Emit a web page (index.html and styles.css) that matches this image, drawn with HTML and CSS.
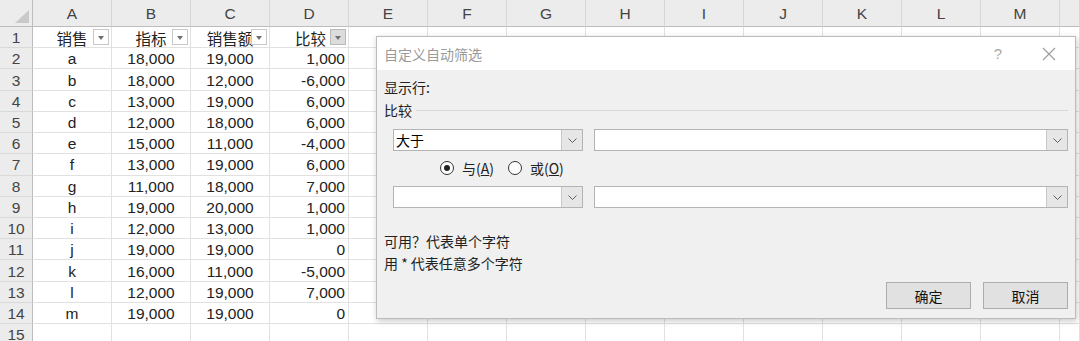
FILE: index.html
```html
<!DOCTYPE html>
<html lang="zh-CN">
<head>
  <meta charset="UTF-8" />
  <title>自定义自动筛选</title>
  <link rel="stylesheet" href="styles.css">
</head>
<body>
  <div class="sheet" id="sheet"></div>

  <div class="dialog">
    <div class="title">
      <span class="title-text">自定义自动筛选</span>
      <span class="help">?</span>
      <span class="close">
        <svg width="14" height="14" viewBox="0 0 14 14"><path d="M1 1L13 13M13 1L1 13" stroke="#9c9c9c" stroke-width="1.1" fill="none"/></svg>
      </span>
    </div>
    <div class="body">
      <div class="line">显示行:</div>
      <div class="group"><span>比较</span><i class="rule"></i></div>
      <div class="condition">
        <div class="combo op"><span>大于</span><i class="drop"><svg width="9" height="5" viewBox="0 0 9 5"><path d="M0.5 0.5L4.5 4.5L8.5 0.5" stroke="#606060" fill="none"/></svg></i></div>
        <div class="combo value"><span></span><i class="drop"><svg width="9" height="5" viewBox="0 0 9 5"><path d="M0.5 0.5L4.5 4.5L8.5 0.5" stroke="#606060" fill="none"/></svg></i></div>
      </div>
      <div class="link">
        <label class="radio on"><i></i><span>与(<u>A</u>)</span></label>
        <label class="radio"><i></i><span>或(<u>O</u>)</span></label>
      </div>
      <div class="condition">
        <div class="combo op"><span></span><i class="drop"><svg width="9" height="5" viewBox="0 0 9 5"><path d="M0.5 0.5L4.5 4.5L8.5 0.5" stroke="#606060" fill="none"/></svg></i></div>
        <div class="combo value"><span></span><i class="drop"><svg width="9" height="5" viewBox="0 0 9 5"><path d="M0.5 0.5L4.5 4.5L8.5 0.5" stroke="#606060" fill="none"/></svg></i></div>
      </div>
      <div class="hint">
        <p>可用？代表单个字符</p>
        <p>用 * 代表任意多个字符</p>
      </div>
      <div class="buttons">
        <button class="btn">确定</button>
        <button class="btn">取消</button>
      </div>
    </div>
  </div>

<script>
// Tabelle aus Daten aufbauen
const spalten = ["A","B","C","D","E","F","G","H","I","J","K","L","M",""];
const daten = [
  ["销售","指标","销售额","比较"],
  ["a","18,000","19,000","1,000"],
  ["b","18,000","12,000","-6,000"],
  ["c","13,000","19,000","6,000"],
  ["d","12,000","18,000","6,000"],
  ["e","15,000","11,000","-4,000"],
  ["f","13,000","19,000","6,000"],
  ["g","11,000","18,000","7,000"],
  ["h","19,000","20,000","1,000"],
  ["i","12,000","13,000","1,000"],
  ["j","19,000","19,000","0"],
  ["k","16,000","11,000","-5,000"],
  ["l","12,000","19,000","7,000"],
  ["m","19,000","19,000","0"],
  []
];

const sheet = document.getElementById("sheet");
let html = '<div class="corner"><i></i></div>';
spalten.forEach(s => { html += '<div class="colhead">' + s + '</div>'; });

daten.forEach((zeile, r) => {
  html += '<div class="rowhead">' + (r + 1) + '</div>';
  spalten.forEach((s, c) => {
    const wert = zeile[c] || "";
    let cls = "cell";
    if (c === 3) cls += " right";
    if (r === 0 && c < 4) {
      cls += " filter";
      if (c === 3) cls += " active";
      html += '<div class="' + cls + '"><span>' + wert + '</span><b class="fbtn"></b></div>';
    } else {
      html += '<div class="' + cls + '">' + wert + '</div>';
    }
  });
});
sheet.innerHTML = html;
</script>
</body>
</html>
```

FILE: styles.css
```css
body {
  margin: 0;
  overflow: hidden;
  background: #fff;
  font-family: "Liberation Sans", "Noto Sans CJK SC", sans-serif;
}
.sheet {
  display: grid;
  grid-template-columns: 33px repeat(13, 79px) 1fr;
  grid-template-rows: 27px;
  grid-auto-rows: 21.23px;
  font-size: 15.5px;
  color: #222;
}
.corner, .colhead, .rowhead {
  background: #ececec;
  color: #444;
  box-sizing: border-box;
}
.corner {
  border-right: 1px solid #bdbdbd;
  border-bottom: 1px solid #bdbdbd;
  position: relative;
}
.corner i {
  position: absolute;
  right: 3px;
  bottom: 3px;
  width: 0;
  height: 0;
  border-left: 14px solid transparent;
  border-bottom: 13px solid #c9c9c9;
}
.colhead {
  border-right: 1px solid #d6d6d6;
  border-bottom: 1px solid #bdbdbd;
  display: flex;
  align-items: flex-end;
  justify-content: center;
  padding-bottom: 3px;
}
.rowhead {
  border-right: 1px solid #bdbdbd;
  border-bottom: 1px solid #d9d9d9;
  display: flex;
  align-items: center;
  justify-content: center;
  padding-top: 2px;
}
.cell {
  border-right: 1px solid #e1e1e1;
  border-bottom: 1px solid #e1e1e1;
  box-sizing: border-box;
  display: flex;
  align-items: center;
  justify-content: center;
  padding: 2px 3px 0;
  white-space: nowrap;
  overflow: hidden;
  position: relative;
}
.cell.right { justify-content: flex-end; }
.cell.filter.right { padding-right: 22px; }
.fbtn {
  position: absolute;
  right: 2px;
  top: 2px;
  width: 16px;
  height: 16px;
  box-sizing: border-box;
  border: 1px solid #c8c8c8;
  background: #fff;
}
.fbtn::after {
  content: "";
  position: absolute;
  left: 4px;
  top: 6px;
  border-left: 3.5px solid transparent;
  border-right: 3.5px solid transparent;
  border-top: 4px solid #707070;
}
.active .fbtn { background: #dcdcdc; border-color: #b8b8b8; }

/* Dialog */
.dialog {
  position: absolute;
  left: 376px;
  top: 36px;
  width: 700px;
  height: 283px;
  box-sizing: border-box;
  border: 1px solid #bcbcbc;
  background: #f0f0f0;
  box-shadow: 1px 2px 6px rgba(0, 0, 0, 0.22);
  font-family: "Noto Sans CJK SC", "Liberation Sans", sans-serif;
  font-size: 14px;
  color: #222;
}
.title {
  height: 33px;
  background: #fff;
  display: flex;
  align-items: center;
  padding-left: 7px;
}
.title-text { color: #9a9a9a; flex: 1; }
.help {
  color: #a8a8a8;
  font-family: "Liberation Sans", sans-serif;
  font-size: 15px;
  margin-right: 40px;
}
.close { width: 14px; height: 14px; margin-right: 19px; display: flex; }
.body { padding: 0 7px 0 7px; }
.line { height: 20px; line-height: 20px; margin-top: 7px; }
.group {
  display: flex;
  align-items: center;
  height: 20px;
  line-height: 20px;
  margin-top: 3px;
}
.rule {
  flex: 1;
  height: 1px;
  background: #d8d8d8;
  margin-left: 4px;
  margin-top: 1px;
}
.condition {
  display: flex;
  gap: 11px;
  margin-left: 9px;
  margin-top: 9px;
}
.condition + .condition { margin-top: 7px; }
.combo {
  height: 22px;
  box-sizing: border-box;
  border: 1px solid #b4b4b4;
  background: #fff;
  display: flex;
  align-items: center;
}
.combo span { flex: 1; padding-left: 2px; color: #000; }
.combo.op { width: 190px; }
.combo.value { flex: 1; }
.drop {
  width: 20px;
  align-self: stretch;
  background: #e6e6e6;
  border-left: 1px solid #c8c8c8;
  display: flex;
  align-items: center;
  justify-content: center;
}
.link {
  display: flex;
  align-items: center;
  height: 18px;
  margin-top: 8px;
  padding-left: 56px;
  gap: 14px;
}
.radio { display: flex; align-items: center; gap: 8px; }
.radio i {
  width: 14px;
  height: 14px;
  box-sizing: border-box;
  border: 1px solid #333;
  border-radius: 50%;
  background: #fff;
  position: relative;
}
.radio.on i::after {
  content: "";
  position: absolute;
  left: 3px;
  top: 3px;
  width: 6px;
  height: 6px;
  border-radius: 50%;
  background: #222;
}
.hint { margin-top: 22px; }
.hint p { margin: 0; line-height: 22px; }
.buttons {
  display: flex;
  justify-content: flex-end;
  gap: 12px;
  margin-top: 8px;
}
.btn {
  width: 85px;
  height: 27px;
  background: #e1e1e1;
  border: 1px solid #adadad;
  font-family: "Noto Sans CJK SC", sans-serif;
  font-size: 14px;
  color: #111;
  padding: 0;
}
```
